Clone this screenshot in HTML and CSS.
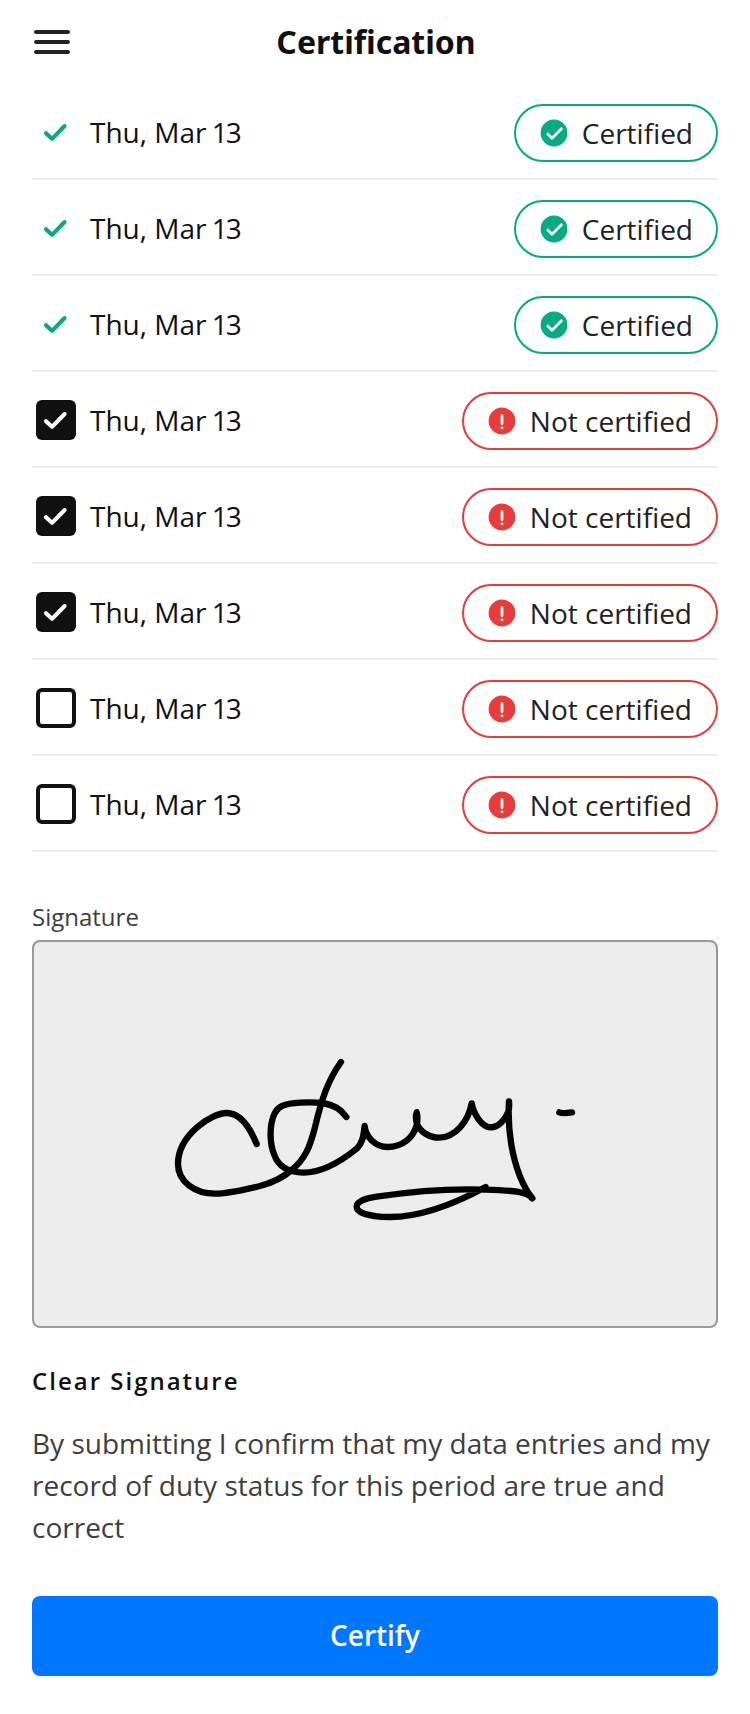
FILE: index.html
```html
<!DOCTYPE html>
<html lang="en">
<head>
    <meta charset="UTF-8">
    <meta name="viewport" content="width=device-width, initial-scale=1.0">
    <title>Certification</title>
    <link rel="stylesheet" href="styles.css">
</head>
<body>
    <header class="header">
        <button type="button" class="menu" aria-label="Menu">
            <span></span>
            <span></span>
            <span></span>
        </button>
        <h1>Certification</h1>
    </header>

    <main class="container">
        <ul class="days" id="days"></ul>

        <p class="label">Signature</p>
        <div class="signature">
            <svg width="430" height="188" viewBox="0 0 1290 564">
                <path d="M290 312 C268 258 238 219 200 219 C155 219 54 285 54 372 C54 425 105 461 165 461 C205 461 250 450 300 438 C345 426 370 412 395 390 C435 358 450 320 465 262 C484 180 504 120 543 66" />
                <path d="M559 231 C545 210 520 194 488 189 C470 187 440 187 420 188 C370 191 353 200 343 222 C328 255 328 310 343 345 C355 378 380 397 430 398 C480 398 530 375 590 326 C608 308 610 290 614 258 C617 290 645 321 683 321 C725 321 760 295 770 255 C773 240 773 228 770 217 C767 228 767 240 771 252 C780 275 808 293 837 293 C885 293 925 245 935 190 C940 220 965 262 992 262 C1015 262 1035 240 1045 215 C1048 205 1048 195 1047 184 C1045 215 1045 260 1054 315 C1064 370 1085 435 1117 475 C1100 455 1070 452 975 449 C880 445 750 455 650 470 C615 475 590 485 590 500 C590 520 635 530 690 531 C760 531 850 510 977 441" />
                <path d="M1198 217 C1208 221 1218 220 1236 217" />
            </svg>
        </div>
        <button type="button" class="clear">Clear Signature</button>

        <p class="confirm">By submitting I confirm that my data entries and my record of duty status for this period are true and correct</p>
        <button type="button" class="certify">Certify</button>
    </main>

    <script>
        const days = [
            { weekday: "Thu", month: "Mar", day: 13, state: "done" },
            { weekday: "Thu", month: "Mar", day: 13, state: "done" },
            { weekday: "Thu", month: "Mar", day: 13, state: "done" },
            { weekday: "Thu", month: "Mar", day: 13, state: "checked" },
            { weekday: "Thu", month: "Mar", day: 13, state: "checked" },
            { weekday: "Thu", month: "Mar", day: 13, state: "checked" },
            { weekday: "Thu", month: "Mar", day: 13, state: "empty" },
            { weekday: "Thu", month: "Mar", day: 13, state: "empty" },
        ];

        const tick = `<svg width="40" height="40" viewBox="0 0 40 40"><path class="tick" d="M10 21.2L16 26.8L28.6 14" /></svg>`;

        const okIcon = `
            <svg width="32" height="32" viewBox="0 0 32 32">
                <circle cx="16" cy="16" r="13.4" />
                <path d="M9.8 17L14 21.2L23.4 11.7" />
            </svg>`;

        const alertIcon = `
            <svg width="32" height="32" viewBox="0 0 32 32">
                <circle cx="16" cy="16" r="13.4" />
                <path d="M16 10.7V18.7M16 22.8V22.9" />
            </svg>`;

        document.getElementById("days").innerHTML = days.map(item => {
            const certified = item.state === "done";
            return `
                <li class="day">
                    <span class="box ${item.state}">${item.state === "empty" ? "" : tick}</span>
                    <span class="date">${item.weekday}, ${item.month} <span class="num">${item.day}</span></span>
                    <span class="status ${certified ? "ok" : "alert"}">
                        ${certified ? okIcon : alertIcon}
                        <span>${certified ? "Certified" : "Not certified"}</span>
                    </span>
                </li>
            `;
        }).join("");
    </script>
</body>
</html>
```
FILE: styles.css
```css
* {
    box-sizing: border-box;
}

body {
    font-family: "Open Sans", "Liberation Sans", sans-serif;
    margin: 0;
    background: white;
    color: #111;
    font-size: 28px;
}

svg {
    display: block;
    flex: none;
}

button {
    font-family: inherit;
    border: none;
    padding: 0;
    cursor: pointer;
}

.header {
    display: grid;
    grid-template-columns: 36px 1fr 34px;
    align-items: center;
    height: 84px;
    padding: 0 34px;
}

.header h1 {
    margin: 0;
    font-family: "Noto Sans", sans-serif;
    font-size: 32px;
    line-height: 44px;
    font-weight: 700;
    text-align: center;
}

.menu {
    display: flex;
    flex-direction: column;
    gap: 6px;
    background: none;
}

.menu span {
    width: 36px;
    height: 4px;
    border-radius: 2px;
    background: #222;
}

.container {
    padding: 0 32px;
}

.days {
    list-style: none;
    margin: 0;
    padding: 0;
}

.day {
    display: flex;
    align-items: center;
    height: 96px;
    padding: 20px 0 16px 4px;
    border-bottom: 2px solid #ececec;
}

.box {
    width: 40px;
    height: 40px;
    margin: 0 14px 2px 0;
    border-radius: 6px;
}

.box.checked {
    background: #111;
}

.box.empty {
    border: 4px solid #111;
}

.tick {
    fill: none;
    stroke: white;
    stroke-width: 4;
    stroke-linecap: round;
    stroke-linejoin: round;
}

.done .tick {
    stroke: #05ab83;
}

.date {
    flex: 1;
    line-height: 38px;
    margin-bottom: 2px;
}

.num {
    margin-left: -2px;
    letter-spacing: -2px;
}

.status {
    display: flex;
    align-items: center;
    gap: 12px;
    height: 58px;
    padding: 0 23px 0 22px;
    border: 2px solid;
    border-radius: 29px;
    line-height: 38px;
}

.status span {
    color: #222;
}

.status circle {
    fill: currentColor;
}

.status path {
    fill: none;
    stroke: white;
    stroke-width: 2.7;
    stroke-linecap: round;
    stroke-linejoin: round;
}

.status.ok {
    color: #05ab83;
}

.status.alert {
    padding-right: 24px;
    color: #e53c3c;
}

.label {
    margin: 48px 0 6px;
    font-size: 24px;
    line-height: 34px;
    color: #3e3e3e;
}

.signature {
    display: flex;
    align-items: center;
    justify-content: center;
    height: 388px;
    border: 2px solid #999;
    border-radius: 8px;
    background: #ececec;
}

.signature path {
    fill: none;
    stroke: black;
    stroke-width: 19;
    stroke-linecap: round;
    stroke-linejoin: round;
}

.clear {
    display: block;
    margin-top: 36px;
    background: none;
    color: #111;
    font-size: 24px;
    line-height: 34px;
    font-weight: 600;
    letter-spacing: 2px;
}

.confirm {
    margin: 24px 0 48px;
    line-height: 42px;
    color: #3e3e3e;
}

.certify {
    width: 100%;
    height: 80px;
    padding-bottom: 2px;
    border-radius: 8px;
    background: #07f;
    color: white;
    font-size: 28px;
    font-weight: 600;
}
```
